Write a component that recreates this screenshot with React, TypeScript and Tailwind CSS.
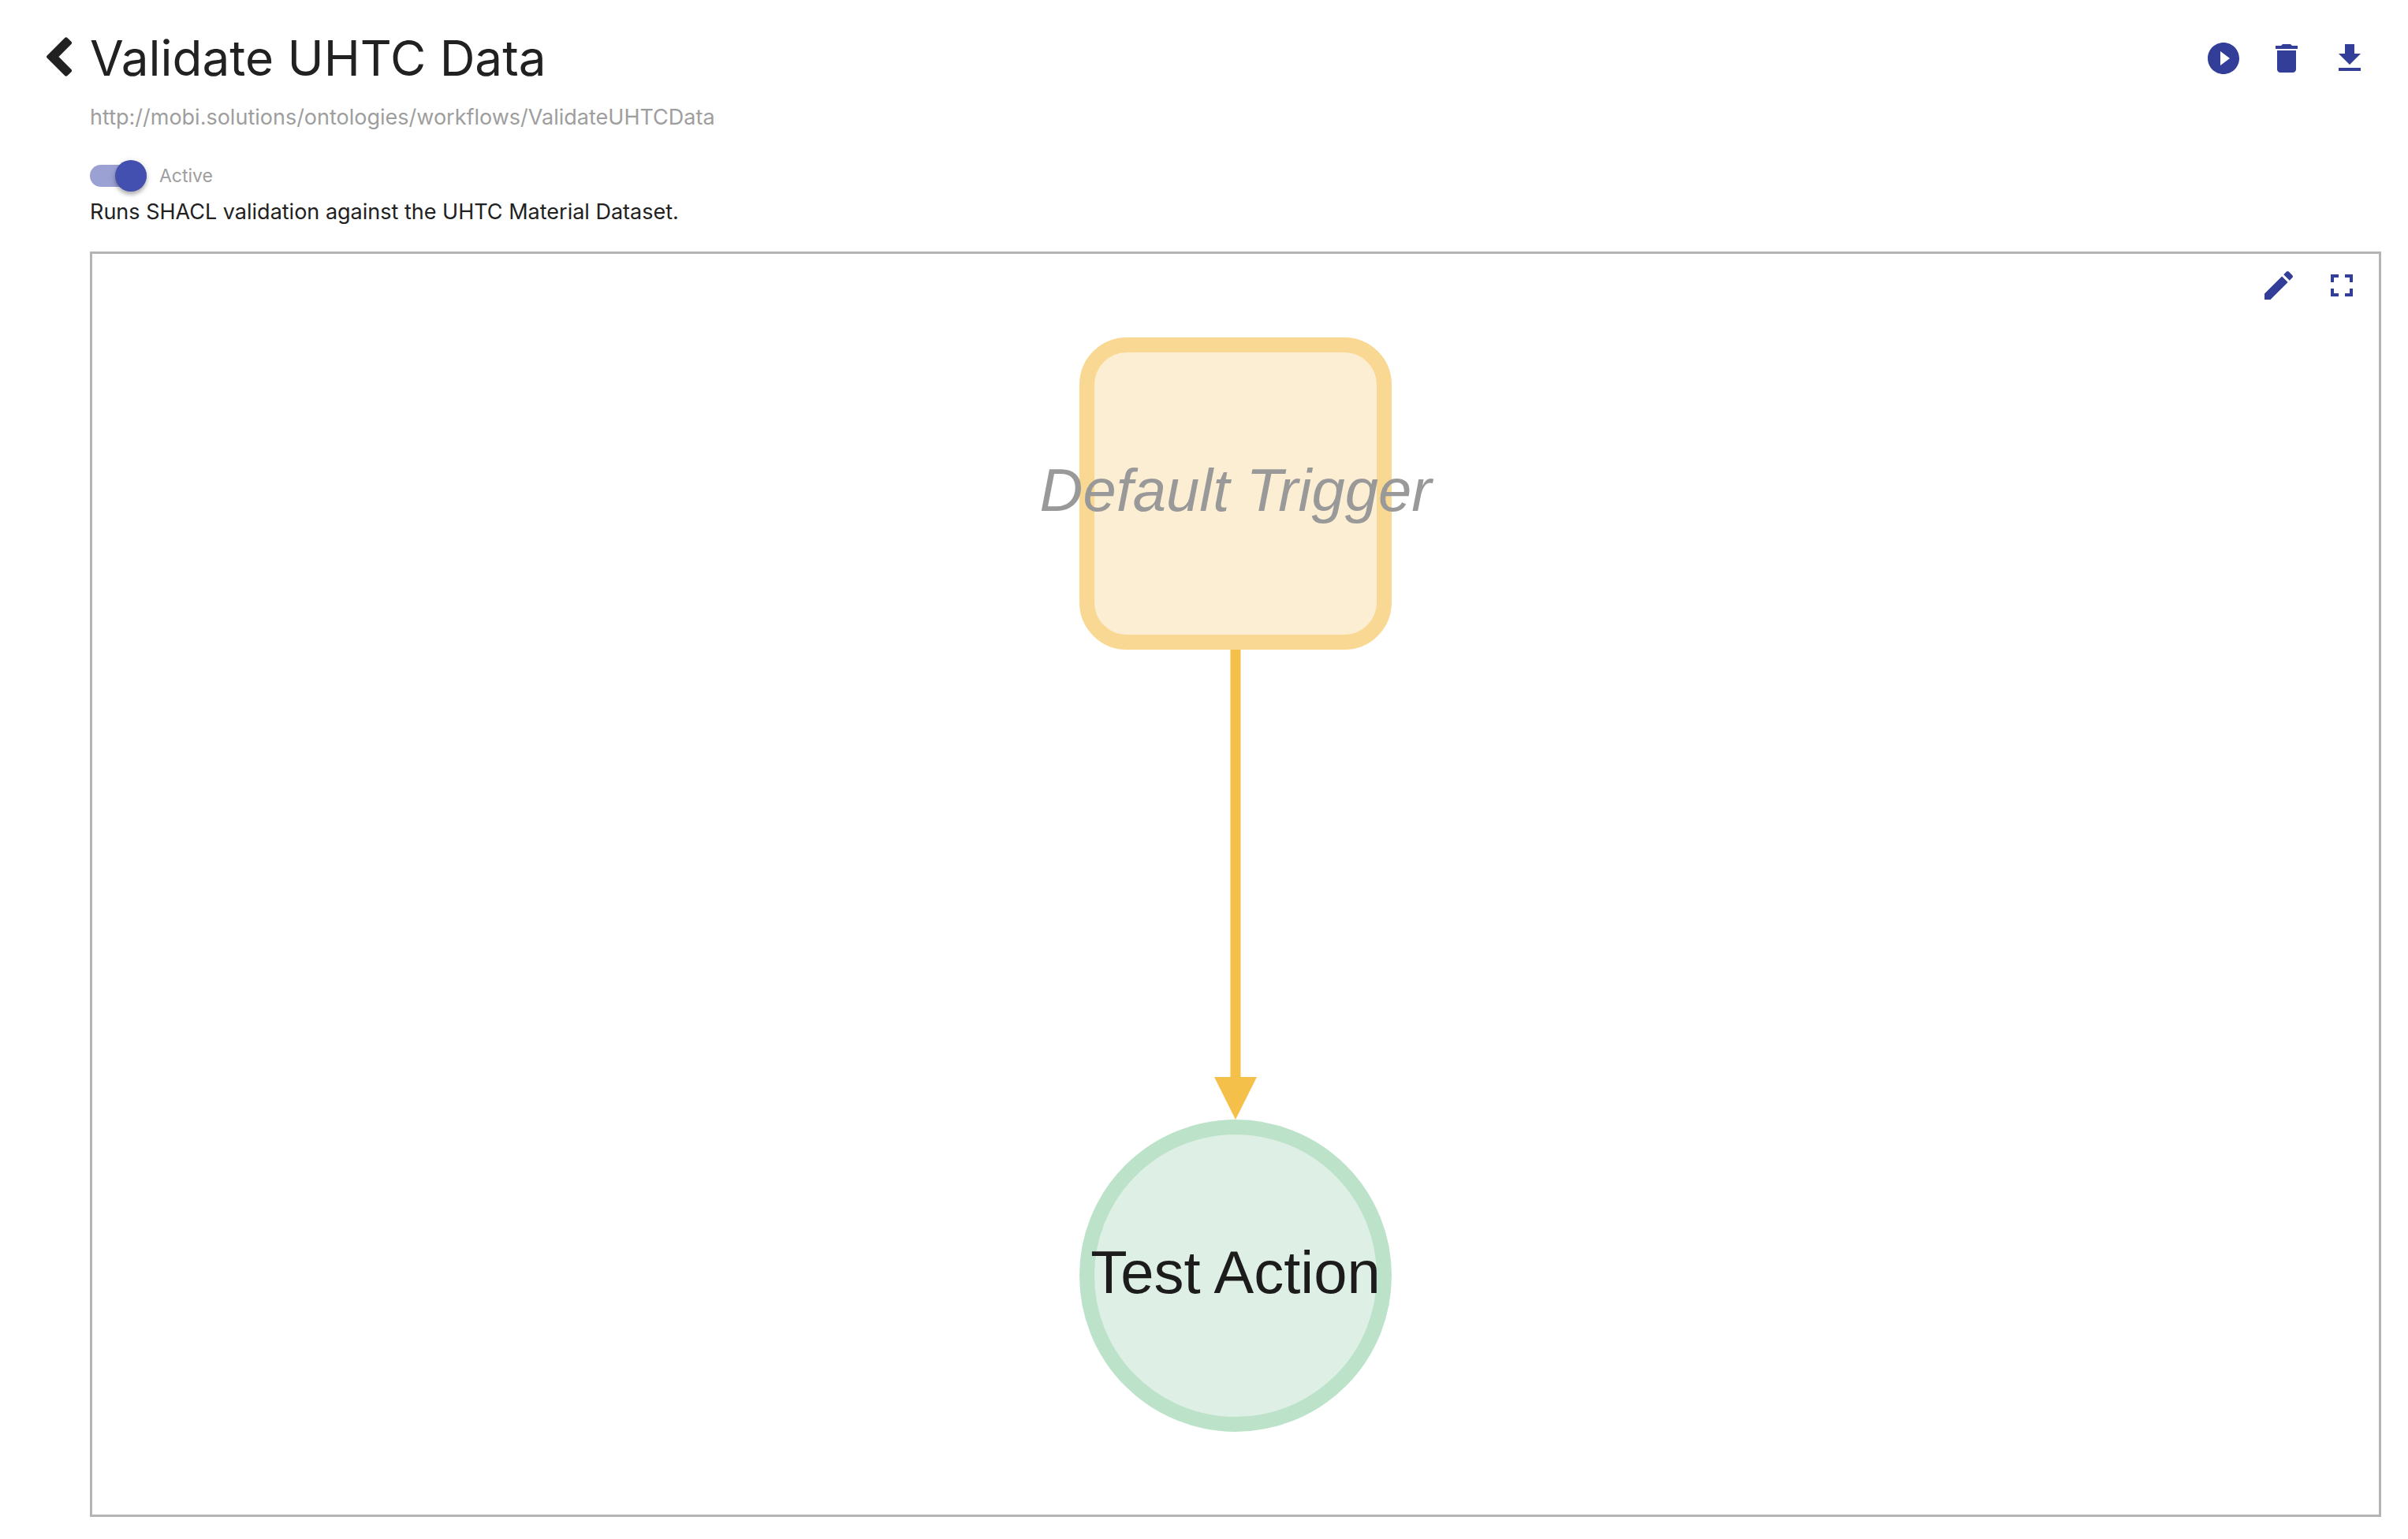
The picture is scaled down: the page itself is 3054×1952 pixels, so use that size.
import { useState } from "react";
import type { ReactNode } from "react";

function IconButton({ label, children }: { label: string; children: ReactNode }) {
  return (
    <button type="button" aria-label={label} className="flex size-20 items-center justify-center rounded-full text-[#333e99]">
      <svg viewBox="0 0 24 24" className="size-12" fill="currentColor" aria-hidden="true">
        {children}
      </svg>
    </button>
  );
}

function ActiveToggle() {
  const [active, setActive] = useState(true);
  return (
    <div className="flex h-10 items-center gap-4">
      <span className="relative flex h-10 w-[72px] items-center">
        <input
          id="workflow-active"
          type="checkbox"
          role="switch"
          checked={active}
          onChange={(e) => setActive(e.target.checked)}
          className="peer h-7 w-[72px] appearance-none rounded-full bg-gray-300 checked:bg-[#9ba2d3]"
        />
        <span className="pointer-events-none absolute left-0 size-10 rounded-full bg-gray-50 shadow-[0_4px_4px_rgba(0,0,0,0.2),0_2px_8px_rgba(0,0,0,0.16)] peer-checked:left-8 peer-checked:bg-[#4450af]" />
      </span>
      <label htmlFor="workflow-active" className="text-[23px] leading-10 text-[#9e9e9e]">
        Active
      </label>
    </div>
  );
}

function WorkflowGraph() {
  return (
    <div className="flex flex-1 flex-col items-center justify-center font-['Liberation_Sans',Arial,sans-serif] text-[76px] leading-none whitespace-nowrap">
      <div className="flex size-[396px] items-center justify-center rounded-[60px] border-[19px] border-[#f9d893] bg-[#fceed3] pb-2">
        <span className="text-[#999999] italic">Default Trigger</span>
      </div>
      <svg viewBox="0 0 54 596" className="h-[596px] w-[54px]" fill="#f4c04a" aria-hidden="true">
        <rect x="20.5" y="0" width="13" height="544" />
        <path d="M0 542h54l-27 54z" />
      </svg>
      <div className="flex size-[396px] items-center justify-center rounded-full border-[19px] border-[#bce3ca] bg-[#deefe5] pb-2">
        <span className="text-[#1c1c1c]">Test Action</span>
      </div>
    </div>
  );
}

export default function App() {
  return (
    <main className="flex min-h-screen flex-col bg-white pt-[34px] pr-[34px] pb-7 pl-[114px] font-[Inter,sans-serif] text-[#212121]">
      <header className="flex h-20 items-center">
        <button type="button" aria-label="Back" className="-ml-[57px] flex w-[57px] items-center pb-1">
          <svg viewBox="0 0 32 50" className="ml-0.5 h-[50px] w-8" fill="currentColor" aria-hidden="true">
            <path d="M.7 23.600 23.200.9q1.600-1.400 3.200 0l5 4.900q1.400 1.600 0 3.200L15.500 25l15.900 16q1.400 1.600 0 3.200l-5 4.900q-1.600 1.400-3.200 0L.7 26.400q-1.400-1.400 0-2.800z" />
          </svg>
        </button>
        <h1 className="flex-1 text-[62px] leading-20 font-normal">Validate UHTC Data</h1>
        <div className="flex">
          <IconButton label="Run workflow">
            <path d="M12 2C6.480 2 2 6.480 2 12s4.480 10 10 10 10-4.480 10-10S17.520 2 12 2zm-2 14.500v-9l6 4.500-6 4.500z" />
          </IconButton>
          <IconButton label="Delete workflow">
            <path d="M6 19c0 1.100.9 2 2 2h8c1.100 0 2-.9 2-2V7H6v12zM19 4h-3.500l-1-1h-5l-1 1H5v2h14V4z" />
          </IconButton>
          <IconButton label="Download workflow">
            <path d="M19 9h-4V3H9v6H5l7 7 7-7zM5 18v2h14v-2H5z" />
          </IconButton>
        </div>
      </header>
      <p className="mt-[17px] mb-9 text-[27px] leading-9 text-[#9e9e9e]">
        http://mobi.solutions/ontologies/workflows/ValidateUHTCData
      </p>
      <ActiveToggle />
      <p className="mt-2 mb-8 text-[27px] leading-9">Runs SHACL validation against the UHTC Material Dataset.</p>
      <section aria-label="Workflow diagram" className="relative flex flex-1 flex-col border-[3px] border-[#b4b4b4]">
        <WorkflowGraph />
        <div className="absolute top-0 right-[7px] flex">
          <IconButton label="Edit workflow">
            <path d="M3 17.250V21h3.750L17.810 9.940l-3.750-3.750L3 17.250zM20.710 7.040c.39-.39.39-1.020 0-1.410l-2.340-2.340c-.39-.39-1.020-.39-1.410 0l-1.830 1.830 3.750 3.750 1.830-1.830z" />
          </IconButton>
          <IconButton label="Full screen">
            <path d="M7 14H5v5h5v-2H7v-3zm-2-4h2V7h3V5H5v5zm12 7h-3v2h5v-5h-2v3zM14 5v2h3v3h2V5h-5z" />
          </IconButton>
        </div>
      </section>
    </main>
  );
}
